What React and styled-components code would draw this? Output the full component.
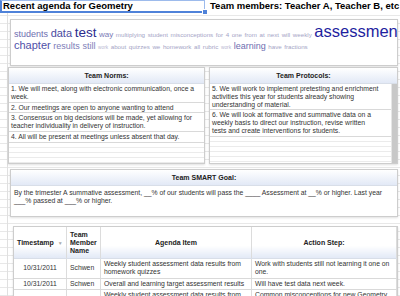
import styled, { createGlobalStyle } from "styled-components";

const GlobalStyle = createGlobalStyle`
  html, body { margin: 0; padding: 0; }
  body {
    width: 400px;
    height: 296px;
    overflow: hidden;
    font-family: "Liberation Sans", Arial, sans-serif;
    background-color: #fff;
    background-image:
      linear-gradient(to right, transparent 7px, #e0e0e0 7px, #e0e0e0 8px, transparent 8px),
      repeating-linear-gradient(to bottom, transparent 0 7px, #e8e8e8 7px 8px);
  }
`;

const TitleRow = styled.div`
  display: flex;
  height: 13px;
  background: #fff;
`;

const TitleCell = styled.div`
  position: relative;
  box-sizing: border-box;
  width: 205px;
  height: 13px;
  border: 1px solid #9dbbec;
  border-left: 2px solid #4f82d9;
  border-bottom: 2px solid #4f82d9;
  padding-left: 1px;
  font-size: 9.5px;
  font-weight: bold;
  line-height: 10px;
  color: #000;
  white-space: nowrap;
`;

const Handle = styled.span`
  position: absolute;
  right: -4px;
  bottom: -4px;
  width: 4px;
  height: 4px;
  background: #4f82d9;
  border: 1px solid #fff;
`;

const TeamCell = styled.div`
  padding-left: 5px;
  font-size: 9.5px;
  font-weight: bold;
  line-height: 11px;
  color: #000;
  white-space: nowrap;
`;

const Panel = styled.div`
  box-sizing: border-box;
  background: #fff;
  border: 1px solid #cdcdcd;
  box-shadow: 0 1px 2px rgba(0, 0, 0, 0.12);
  overflow: hidden;
`;

const CloudPanel = styled(Panel)`
  margin: 6px 2px 0 10px;
  height: 47px;
  padding: 3px 0 0 3px;
`;

const CloudLine = styled.div`
  display: flex;
  align-items: baseline;
  gap: 2.6px;
  height: ${(p) => p.$h}px;
  white-space: nowrap;
`;

const Word = styled.span`
  flex: none;
  font-size: ${(p) => p.$size}px;
  color: ${(p) => p.$color};
  line-height: 1;
`;

const PanelRow = styled.div`
  display: flex;
  gap: 4px;
  margin: 1px 0 0 8px;
  height: 97px;
`;

const ListPanel = styled(Panel)`
  width: ${(p) => p.$w}px;
  display: flex;
  flex-direction: column;
`;

const PanelHead = styled.div`
  flex: none;
  height: 15px;
  display: flex;
  align-items: center;
  justify-content: center;
  font-size: 7px;
  font-weight: bold;
  color: #222;
  background: linear-gradient(#fff, #e2e9f6);
  border-bottom: 1px solid #d8dee8;
`;

const ListBody = styled.div`
  flex: 1;
  display: flex;
  min-height: 0;
`;

const Rows = styled.div`
  flex: 1;
  display: flex;
  flex-direction: column;
`;

const Row = styled.div`
  padding: 1px ${(p) => p.$pr || 2}px 1px 2px;
  font-size: 6.8px;
  line-height: 7.8px;
  color: #333;
  border-bottom: 1px solid #d9d9d9;
`;

const Filler = styled.div`
  flex: 1;
  background: repeating-linear-gradient(to bottom, transparent 0 4px, #ebebeb 4px 5px);
`;

const Scrollbar = styled.div`
  width: 5px;
  background: #c8c8c8;
  border-left: 1px solid #e6e6e6;
`;

const GoalPanel = styled(Panel)`
  margin: 5px 2px 0 10px;
  height: 48px;
`;

const GoalText = styled.div`
  padding: 3px 3px;
  font-size: 6.8px;
  line-height: 8px;
  color: #333;
`;

const TablePanel = styled(Panel)`
  margin: 9px 2px 0 13px;
  height: 90px;
`;

const Table = styled.table`
  width: 100%;
  border-collapse: collapse;
  table-layout: fixed;
  font-size: 6.8px;
  color: #333;
`;

const Th = styled.th`
  width: ${(p) => (p.$w ? `${p.$w}px` : "auto")};
  height: 31px;
  padding: 0 3px;
  font-weight: bold;
  font-size: 7px;
  line-height: 8px;
  color: #222;
  text-align: ${(p) => p.$align || "center"};
  background: linear-gradient(#fff 60%, #e2e9f6);
  border-right: 1px solid #dcdcdc;
  border-bottom: 1px solid #d8dee8;
`;

const SortArrow = styled.span`
  margin-left: 4px;
  color: #aaa;
  font-size: 5px;
`;

const Td = styled.td`
  padding: 1px 3px;
  line-height: 8.4px;
  text-align: ${(p) => p.$align || "left"};
  vertical-align: middle;
  border-right: 1px solid #dcdcdc;
  border-bottom: 1px solid #d9d9d9;
`;

const SMALL = 6.2;
const TINY = 4.8;
const SOFT = "#a4a4c6";
const FAINT = "#b8b8d2";

const cloud = [
  [
    ["students", 9, "#6e6eb0"],
    ["data", 11, "#4a4aa0"],
    ["test", 13.5, "#2b2b8e"],
    ["way", 8, "#7a7ab6"],
    ["multiplying", SMALL, SOFT],
    ["student", SMALL, SOFT],
    ["misconceptions", SMALL, SOFT],
    ["for", SMALL, SOFT],
    ["4", SMALL, SOFT],
    ["one", SMALL, SOFT],
    ["from", SMALL, SOFT],
    ["at", SMALL, SOFT],
    ["next", SMALL, SOFT],
    ["will", SMALL, SOFT],
    ["weekly", SMALL, SOFT],
    ["assessment", 16.5, "#1f1fa0"],
  ],
  [
    ["chapter", 11, "#5050a8"],
    ["results", 9, "#7c7cb8"],
    ["still", 9, "#7e7eb8"],
    ["work", TINY, FAINT],
    ["about", SMALL, SOFT],
    ["quizzes", SMALL, SOFT],
    ["we", SMALL, SOFT],
    ["homework", SMALL, SOFT],
    ["all", SMALL, SOFT],
    ["rubric", SMALL, SOFT],
    ["work", TINY, FAINT],
    ["learning", 9, "#6e6eb0"],
    ["have", SMALL, SOFT],
    ["fractions", SMALL, SOFT],
  ],
];

const norms = [
  "1. We will meet, along with electronic communication, once a week.",
  "2. Our meetings are open to anyone wanting to attend",
  "3. Consensus on big decisions will be made, yet allowing for teacher individuality in delivery of instruction.",
  "4. All will be present at meetings unless absent that day.",
];

const protocols = [
  "5. We will work to implement pretesting and enrichment activities this year for students already showing understanding of material.",
  "6. We will look at formative and summative data on a weekly basis to direct our instruction, revise written tests and create interventions for students.",
];

const agenda = [
  {
    date: "10/31/2011",
    name: "Schwen",
    item: "Weekly student assessment data results from homework quizzes",
    step: "Work with students still not learning it one on one.",
  },
  {
    date: "10/31/2011",
    name: "Schwen",
    item: "Overall and learning target assessment results",
    step: "Will have test data next week.",
  },
  {
    date: "10/31/2011",
    name: "Schwen",
    item: "Weekly student assessment data results from homework quizzes",
    step: "Common misconceptions for new Geometry chapter.",
  },
];

export default function App() {
  return (
    <>
      <GlobalStyle />
      <TitleRow>
        <TitleCell>
          Recent agenda for Geometry
          <Handle />
        </TitleCell>
        <TeamCell>Team members: Teacher A, Teacher B, etc</TeamCell>
      </TitleRow>

      <CloudPanel>
        {cloud.map((line, i) => (
          <CloudLine key={i} $h={i === 0 ? 17 : 13}>
            {line.map(([w, size, color], j) => (
              <Word key={j} $size={size} $color={color}>
                {w}
              </Word>
            ))}
          </CloudLine>
        ))}
      </CloudPanel>

      <PanelRow>
        <ListPanel $w={197}>
          <PanelHead>Team Norms:</PanelHead>
          <ListBody>
            <Rows>
              {norms.map((t) => (
                <Row key={t}>{t}</Row>
              ))}
              <Filler />
            </Rows>
          </ListBody>
        </ListPanel>
        <ListPanel $w={189}>
          <PanelHead>Team Protocols:</PanelHead>
          <ListBody>
            <Rows>
              {protocols.map((t) => (
                <Row key={t} $pr={10}>
                  {t}
                </Row>
              ))}
              <Filler />
            </Rows>
            <Scrollbar />
          </ListBody>
        </ListPanel>
      </PanelRow>

      <GoalPanel>
        <PanelHead>Team SMART Goal:</PanelHead>
        <GoalText>
          By the trimester A summative assessment, __% of our students will pass the ____ Assessment
          at __% or higher. Last year ___% passed at ___% or higher.
        </GoalText>
      </GoalPanel>

      <TablePanel>
        <Table>
          <thead>
            <tr>
              <Th $w={46} $align="left">
                Timestamp<SortArrow>▼</SortArrow>
              </Th>
              <Th $w={27} $align="left">
                Team Member Name
              </Th>
              <Th $w={144}>Agenda Item</Th>
              <Th>Action Step:</Th>
            </tr>
          </thead>
          <tbody>
            {agenda.map((r, i) => (
              <tr key={i}>
                <Td $align="center">{r.date}</Td>
                <Td>{r.name}</Td>
                <Td>{r.item}</Td>
                <Td>{r.step}</Td>
              </tr>
            ))}
          </tbody>
        </Table>
      </TablePanel>
    </>
  );
}
